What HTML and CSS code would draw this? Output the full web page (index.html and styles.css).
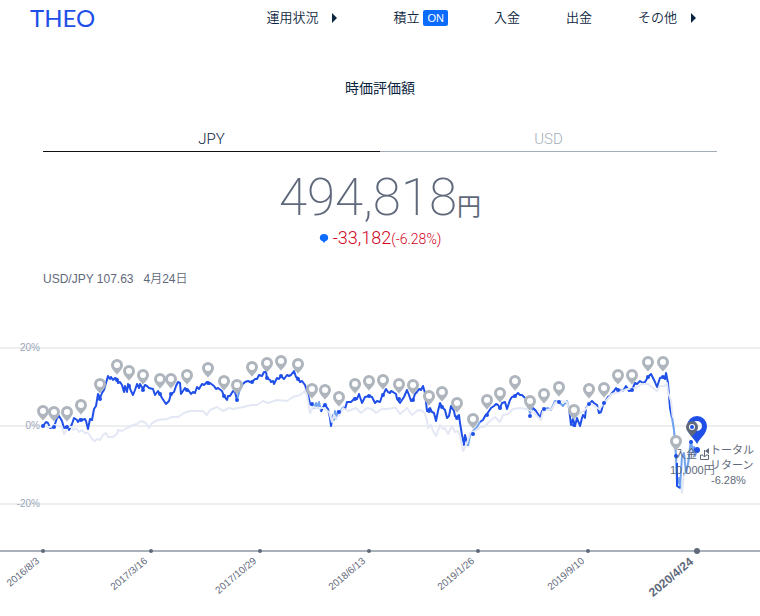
FILE: index.html
```html
<!DOCTYPE html>
<html lang="ja">
<head>
  <meta charset="UTF-8">
  <meta name="viewport" content="width=device-width, initial-scale=1">
  <title>THEO 運用状況</title>
  <link rel="stylesheet" href="styles.css">
</head>
<body>
  <header class="header">
    <a class="logo" href="#">THEO</a>
    <nav class="nav">
      <a class="nav-menu" href="#">運用状況</a>
      <a href="#">積立<span class="badge">ON</span></a>
      <a href="#">入金</a>
      <a href="#">出金</a>
      <a class="nav-menu" href="#">その他</a>
    </nav>
  </header>

  <main>
    <section class="summary">
      <h1>時価評価額</h1>
      <div class="tabs">
        <button class="tab active" type="button">JPY</button>
        <button class="tab" type="button">USD</button>
      </div>
      <p class="amount">494,818<span class="yen">円</span></p>
      <p class="change">
        <svg class="balloon" viewBox="0 0 10 9"><path d="M5 0C7.600 0 9.200 1.500 9.200 3.700C9.200 5.600 8 6.700 6.400 7.200L5 9L3.600 7.200C2 6.700 .8 5.600 .8 3.700C.8 1.500 2.400 0 5 0Z"/></svg>
        <span>-33,182<small>(-6.28%)</small></span>
      </p>
      <p class="rate"><span>USD/JPY 107.63</span><span>4月24日</span></p>
    </section>

    <svg class="chart" viewBox="0 300 760 316">
      <defs>
        <path id="pin" fill-rule="evenodd" d="M0 9.800C-1.500 7.200-6 4.200-6 0A6 6 0 0 1 6 0C6 4.200 1.500 7.200 0 9.800ZM0-3A3 3 0 1 0 0 3A3 3 0 1 0 0-3Z"/>
      </defs>

      <g class="grid">
        <path d="M0 348H760M0 426H760M0 504H760"/>
        <text x="40" y="351">20%</text>
        <text x="40" y="429">0%</text>
        <text x="40" y="507">-20%</text>
      </g>

      <polyline class="line-total" points="43,426 46,422 48,423 50,428 54,427 57,418 59,416 62,421 64,428 67,427 69,430 72,424 74,418 77,420 78,422 80,419 82,420 85,419 86,421 88,429 90,419 92,420 94,409 96,406 98,394 100,398 102,393 104,390 106,383 108,376 110,379 111,377 113,380 115,378 117,379 118,383 120,382 122,385 124,392 125,386 127,392 128,384 129,386 131,391 133,395 135,390 137,384 139,388 140,384 143,389 145,385 147,386 149,388 153,389 155,395 158,391 160,394 162,398 164,401 166,404 169,401 171,394 174,392 176,386 178,382 180,383 181,394 183,391 185,388 187,390 189,391 191,394 193,392 195,393 197,387 199,389 202,384 204,385 207,382 209,384 210,383 214,386 216,389 218,388 222,391 224,396 227,400 228,396 230,396 233,391 235,392 237,400"/>
      <polyline class="line-total pale" points="237,400 240,389 243,384"/>
      <polyline class="line-total" points="243,384 245,382 248,381 250,382 252,382 255,379 257,379 259,375 262,376 264,372 266,372 267,378 270,380 271,382 273,381 274,384 277,378 279,379 281,376 284,379 287,375 289,376 291,375 294,371 296,377 298,378 300,382 302,381 305,385 306,388 308,394 310,404 312,405"/>
      <polyline class="line-total pale" points="312,405 314,408 316,403 317,408 319,402 321,411"/>
      <polyline class="line-total" points="321,412 323,407 325,405 328,409 330,418 331,426 333,415"/>
      <polyline class="line-total pale" points="333,414 334,420 335,411 336,419 338,411 340,412 343,407"/>
      <polyline class="line-total" points="343,407 345,409 347,402 351,402 355,398 357,399 359,394 362,403 365,397 369,396 372,397 375,403 377,401 380,402 382,396 384,393 386,389 388,392 390,393 391,391 393,392 396,394 397,399 400,403 402,400 404,397 407,390 409,395 411,401 413,400 415,394 417,392 419,389 421,390 423,386 425,393 427,411 430,408 432,412 434,413 436,421 438,411 440,403 442,407 445,410 447,418 449,416 451,406 454,411 455,416 457,417 459,415 460,423 462,435 464,445 465,435 468,446"/>
      <polyline class="line-total pale" points="468,446 470,435 473,431 477,427 480,422"/>
      <polyline class="line-total" points="480,422 483,420 485,416 487,414 489,411 491,408 494,406 496,404 498,405 500,408 502,403 505,402 507,409 509,403 510,400 512,397 515,396 518,393 520,395 522,395 525,398"/>
      <polyline class="line-total pale" points="525,398 527,403 530,413 533,408 536,411"/>
      <polyline class="line-total" points="533,408 536,411 538,414 540,418 542,411 545,409"/>
      <polyline class="line-total pale" points="545,409 548,408 551,410 555,401 559,402 563,406 567,401 569,408"/>
      <polyline class="line-total" points="569,408 571,425 573,419 575,426 577,418 580,426 582,418 583,415 585,418 586,408 589,404 592,401 594,403 597,405 599,413 601,412 603,405 605,402 608,397 610,396 612,393 614,391 616,388 618,390 623,391 626,386 629,391 632,390 635,383 637,384 640,381 643,383 645,382 648,377 651,374 653,378 655,382 657,387 660,378 663,377 665,379 666,373 668,383 670,408 672,418"/>
      <polyline class="line-market" points="43,426 50,427 55,425 62,427 64,434 66,431 68,427 72,427 73,430 76,428 79,432 82,430 85,433 88,433 91,437 93,440 95,441 97,439 100,440 103,435 106,433 108,437 113,437 117,434 118,430 122,431 127,428 133,425 137,424 141,421 146,423 149,428 152,423 158,420 167,419 172,417 178,417 184,413 190,411 200,411 203,411 207,415 210,410 217,407 223,411 229,408 233,409 243,407 252,405 257,405 263,401 268,403 277,400 287,401 293,397 300,395 305,391 307,395 310,413 313,407 318,408 323,408 329,412 332,422 334,415 336,419 340,414 343,408 348,411 356,408 361,413 367,408 372,409 376,413 382,409 387,409 393,408 396,408 400,414 407,408 412,415 418,410 423,411 425,414 427,420 428,428 431,425 433,431 436,436 440,425 443,429 445,428 448,434 452,426 455,432 458,431 460,436 463,451 467,443 470,433 475,431 480,427 484,427 490,421 495,417 500,422 503,415 508,414 513,409 520,408 526,409 530,410 535,414 541,420 543,411 552,409 555,403 559,401 567,402 570,412 573,417 578,415 585,410 590,403 599,409 605,402 612,394 619,392 628,389 636,388 642,384 648,384 653,388 657,391 660,386 665,386 667,383 668,392 671,401 673,420 675,440 676,473 680,483 682,493 684,473 687,468 690,457 693,450 697,454"/>
      <polyline class="line-total pale" points="672,418 674,430 675,443 676,455 677,485 679,478 680,488 682,456 684,453 686,473 688,464 690,447 691,441 693,452 694,447 695,456 697,450"/>
      <polyline class="line-total" points="677,463 677,486 680,488"/>

      <g id="dots" class="dots"></g>
      <g id="pins" class="pins"></g>

      <path class="pin-total" fill-rule="evenodd" d="M697 444C694 438 687 434 687 426A10 10 0 0 1 707 426C707 434 700 438 697 444ZM697 421A5 5 0 1 0 697 431A5 5 0 1 0 697 421Z"/>
      <circle cx="692" cy="427" r="4" fill="#fff"/>
      <use class="pin-selected" href="#pin" x="692" y="427"/>
      <circle class="dots" cx="692" cy="427" r="2"/>

      <g class="callout">
        <text x="675" y="458">入金</text>
        <path class="deposit" d="M703 455H700.500V459.500H708.500V455H706M704.500 450V457M702.500 455L704.500 457L706.500 455"/>
        <text x="670" y="474">10,000円</text>
        <path d="M705 451L709 448V454Z"/>
        <text x="710" y="454">トータル</text>
        <text x="710" y="469">リターン</text>
        <text x="711" y="484">-6.28%</text>
      </g>

      <g id="axis" class="axis">
        <path d="M0 551H760"/>
      </g>
    </svg>
  </main>

  <script src="chart.js"></script>
</body>
</html>
```
FILE: styles.css
```css
body {
  margin: 0;
  font-family: "Liberation Sans", "Noto Sans CJK JP", sans-serif;
  background: #fff;
  color: #0b2540;
}
h1, p {
  margin: 0;
}
a {
  color: inherit;
  text-decoration: none;
}
.header {
  display: flex;
  align-items: center;
  justify-content: space-between;
  height: 36px;
  padding: 0 54px 0 30px;
}
.logo {
  margin-top: -2px;
  font-family: Lato, sans-serif;
  font-size: 24px;
  color: #1f4fe8;
}
.nav {
  display: flex;
  align-items: center;
  gap: 46px;
  font-size: 13px;
  font-weight: 350;
  line-height: 16px;
}
.nav a {
  display: flex;
  align-items: center;
}
.nav-menu::after {
  content: "";
  margin: 0 10px 0 14px;
  border-left: 5px solid #0b2540;
  border-top: 5px solid transparent;
  border-bottom: 5px solid transparent;
}
.badge {
  margin-left: 4px;
  padding: 0 4px;
  border-radius: 2px;
  background: #0b6cff;
  color: #fff;
  font-size: 11px;
}
.summary {
  padding: 40px 43px 0;
  text-align: center;
}
h1 {
  font-size: 14px;
  font-weight: 400;
  line-height: 24px;
}
.tabs {
  display: flex;
  margin-top: 26px;
}
.tab {
  flex: 1;
  padding: 3px 0 1px;
  border: 0;
  border-bottom: 1px solid #a3adb8;
  background: none;
  color: #a3adb8;
  font-family: Roboto, sans-serif;
  font-size: 15px;
  font-weight: 300;
  line-height: 21px;
  cursor: pointer;
}
.tab.active {
  border-color: #111;
  color: #0b2540;
}
.amount {
  margin-top: 17px;
  color: #5f697b;
  font-family: Roboto, "Noto Sans CJK JP", sans-serif;
  font-size: 51px;
  font-weight: 200;
  line-height: 58px;
}
.yen {
  font-size: 24px;
  font-weight: 400;
  line-height: 24px;
}
.change {
  display: flex;
  align-items: center;
  justify-content: center;
  gap: 4px;
  color: #d0021b;
  font-family: Roboto, sans-serif;
  font-size: 18px;
  font-weight: 300;
  line-height: 22px;
}
.change small {
  font-size: 14px;
}
.balloon {
  width: 10px;
  height: 9px;
  fill: #0b6cff;
}
.rate {
  display: flex;
  gap: 10px;
  margin-top: 20px;
  color: #5f697b;
  font-size: 12px;
  font-weight: 350;
  line-height: 18px;
}
.chart {
  display: block;
  width: 100%;
  margin-top: 12px;
}
.grid path {
  stroke: #eceef0;
  stroke-width: 2;
}
.grid text {
  fill: #9ba6b8;
  font-size: 10px;
  text-anchor: end;
}
.line-total,
.line-market {
  fill: none;
  stroke-width: 2;
  stroke-linejoin: round;
}
.line-total {
  stroke: #1f4fe8;
}
.line-total.pale {
  stroke: #6fa3f0;
}
.line-market {
  stroke: #e3e8f4;
}
.dots,
.pin-total {
  fill: #1f4fe8;
}
.pins {
  fill: #afb5bd;
}
.pin-selected {
  fill: #5f697b;
}
.callout {
  fill: #5f697b;
  font-size: 11px;
  font-weight: 400;
}
.deposit {
  fill: none;
  stroke: #5f697b;
}
.axis {
  fill: #5f697b;
  font-size: 10px;
  text-anchor: end;
}
.axis path {
  stroke: #a9b1bb;
  stroke-width: 2;
}
.axis .current {
  font-size: 12px;
  font-weight: 700;
}
```
FILE: chart.js
```js
// 入金ピンの位置 [x, y]
const pins = [
  [43, 411], [54, 412], [67, 412], [81, 405], [100, 384], [117, 365], [129, 371],
  [143, 375], [160, 379], [171, 379], [187, 375], [208, 368], [224, 381], [237, 385],
  [252, 367], [267, 363], [281, 361], [298, 364], [312, 389], [325, 390], [339, 397],
  [355, 384], [369, 381], [383, 380], [399, 384], [413, 385], [429, 396], [442, 392],
  [457, 403], [473, 419], [487, 400], [500, 393], [515, 381], [530, 401], [544, 394],
  [559, 387], [574, 410], [589, 389], [604, 388], [618, 375], [632, 375], [648, 362],
  [663, 362], [676, 441]
];
const dates = [
  [43, "2016/8/3"], [151, "2017/3/16"], [260, "2017/10/29"], [369, "2018/6/13"],
  [478, "2019/1/26"], [588, "2019/9/10"], [697, "2020/4/24"]
];

function add(parent, name, attrs, text) {
  const el = document.createElementNS("http://www.w3.org/2000/svg", name);
  for (const key in attrs) {
    el.setAttribute(key, attrs[key]);
  }
  if (text) {
    el.textContent = text;
  }
  parent.appendChild(el);
}

const pinGroup = document.getElementById("pins");
const dotGroup = document.getElementById("dots");
const axis = document.getElementById("axis");

pins.forEach(([x, y]) => {
  add(pinGroup, "circle", { cx: x, cy: y, r: 4, fill: "#fff" });
  add(pinGroup, "use", { href: "#pin", x: x, y: y });
  add(dotGroup, "circle", { cx: x, cy: y + 15, r: 2 });
});
add(dotGroup, "circle", { cx: 691, cy: 442, r: 2 });
add(dotGroup, "circle", { cx: 697, cy: 450, r: 3 });

dates.forEach(([x, label], i) => {
  const current = i === dates.length - 1;
  add(axis, "circle", { cx: x, cy: 551, r: current ? 3 : 2 });
  add(axis, "text", {
    class: current ? "current" : "",
    transform: `translate(${x - 3} ${current ? 563 : 562}) rotate(-40)`
  }, label);
});
```
